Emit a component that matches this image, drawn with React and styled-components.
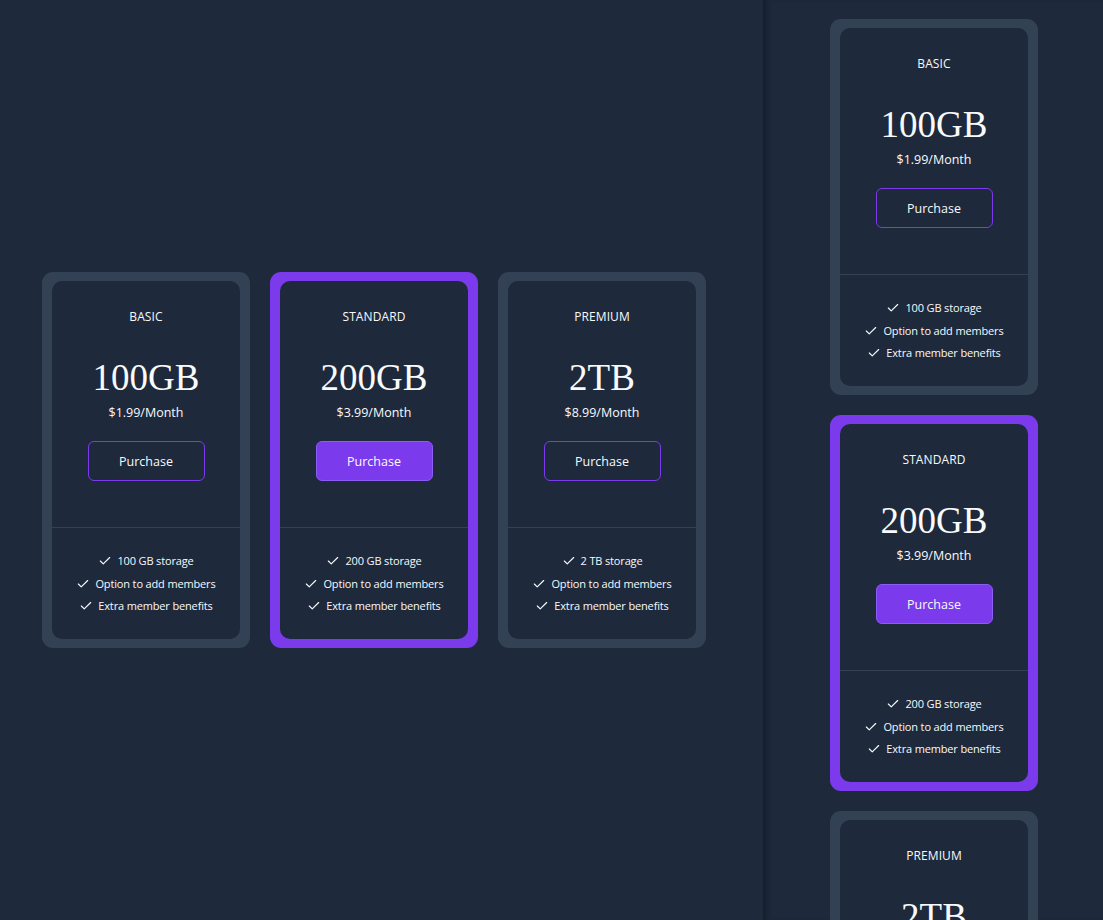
import React from 'react';
import styled, { createGlobalStyle } from 'styled-components';
import { Check } from 'lucide-react';

const GlobalStyle = createGlobalStyle`
  html, body {
    margin: 0;
    padding: 0;
    background: #1e293b;
  }
  body {
    font-family: 'Open Sans', 'Noto Sans', sans-serif;
    color: #f8fafc;
  }
`;

const Page = styled.div`
  display: flex;
  width: 1103px;
  height: 920px;
  overflow: hidden;
  background: #1e293b;
`;

const Desktop = styled.div`
  width: 763px;
  flex-shrink: 0;
  display: flex;
  align-items: center;
  justify-content: center;
  gap: 20px;
  padding-right: 15px;
  box-sizing: border-box;
`;

const Mobile = styled.div`
  flex: 1;
  display: flex;
  flex-direction: column;
  align-items: center;
  gap: 20px;
  padding: 19px 0 0 2px;
  box-sizing: border-box;
  box-shadow: inset 7px 0 6px -4px rgba(10, 15, 25, 0.45);
`;

const Card = styled.div`
  width: 208px;
  flex-shrink: 0;
  padding: 9px 10px;
  box-sizing: border-box;
  border-radius: 11px;
  background: ${(p) => (p.featured ? '#7c3aed' : '#334155')};
`;

const Inner = styled.div`
  background: #1e293b;
  border-radius: 10px;
  text-align: center;
`;

const Top = styled.div`
  display: flex;
  flex-direction: column;
  align-items: center;
  padding: 27px 16px 46px;
  border-bottom: 1px solid #334155;
`;

const Tier = styled.div`
  font-size: 12px;
  line-height: 18px;
  letter-spacing: 0.1px;
`;

const Size = styled.div`
  margin-top: 32px;
  font-family: 'Liberation Serif', 'DejaVu Serif', serif;
  font-variant-numeric: oldstyle-nums;
  font-size: 37px;
  line-height: 40px;
`;

const Price = styled.div`
  margin-top: 6px;
  font-size: 12.5px;
  line-height: 18px;
`;

const Button = styled.button`
  margin-top: 19px;
  width: 117px;
  height: 40px;
  border-radius: 6px;
  font-family: inherit;
  font-size: 12.5px;
  color: #f8fafc;
  cursor: pointer;
  border: 1px solid ${(p) => (p.filled ? '#8b5cf6' : '#7c3aed')};
  background: ${(p) => (p.filled ? '#7c3aed' : 'transparent')};
`;

const Features = styled.ul`
  list-style: none;
  margin: 0;
  padding: 22px 0 21.5px;
`;

const Feature = styled.li`
  display: flex;
  align-items: center;
  justify-content: center;
  gap: 5px;
  font-size: 11px;
  letter-spacing: -0.15px;
  line-height: 22.5px;
`;

const plans = [
  { tier: 'BASIC', size: '100GB', price: '$1.99/Month', storage: '100 GB storage' },
  { tier: 'STANDARD', size: '200GB', price: '$3.99/Month', storage: '200 GB storage', featured: true },
  { tier: 'PREMIUM', size: '2TB', price: '$8.99/Month', storage: '2 TB storage' },
];

const PlanCard = ({ plan }) => (
  <Card featured={plan.featured}>
    <Inner>
      <Top>
        <Tier>{plan.tier}</Tier>
        <Size>{plan.size}</Size>
        <Price>{plan.price}</Price>
        <Button filled={plan.featured}>Purchase</Button>
      </Top>
      <Features>
        {[plan.storage, 'Option to add members', 'Extra member benefits'].map((f) => (
          <Feature key={f}>
            <Check size={14} strokeWidth={2} />
            {f}
          </Feature>
        ))}
      </Features>
    </Inner>
  </Card>
);

export default function App() {
  return (
    <>
      <GlobalStyle />
      <Page>
        <Desktop>
          {plans.map((p) => (
            <PlanCard key={p.tier} plan={p} />
          ))}
        </Desktop>
        <Mobile>
          {plans.map((p) => (
            <PlanCard key={p.tier} plan={p} />
          ))}
        </Mobile>
      </Page>
    </>
  );
}
